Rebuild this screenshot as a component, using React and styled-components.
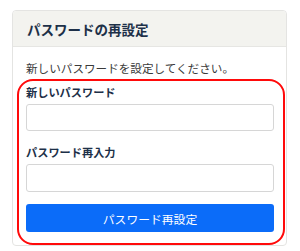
import React from 'react';
import styled, { createGlobalStyle } from 'styled-components';

const GlobalStyle = createGlobalStyle`
  html, body {
    margin: 0;
    padding: 0;
    background: #ffffff;
  }
  body {
    font-family: "Noto Sans CJK JP", "Noto Sans", sans-serif;
  }
  * {
    box-sizing: border-box;
  }
`

const Card = styled.section`
  width: 275px;
  margin: 10px 0 0 12px;
  border: 1px solid #e4e4e2;
  border-radius: 4px;
  background: #fff;
`
const CardHeader = styled.h2`
  margin: 0;
  height: 36px;
  padding: 0 14px;
  display: flex;
  align-items: center;
  background: #f3f3ef;
  border-bottom: 1px solid #e6e6e3;
  border-radius: 4px 4px 0 0;
  font-size: 13.5px;
  font-weight: 700;
  color: #1d3048;
`
const CardBody = styled.div`
  padding: 12px 12px 13px 13px;
`
const Lead = styled.p`
  margin: 0 0 7px;
  font-size: 11.6px;
  line-height: 18px;
  color: #3a3a3a;
`
const Form = styled.form`
  position: relative;
  display: flex;
  flex-direction: column;
`
const Highlight = styled.div`
  position: absolute;
  top: -5px;
  left: -9px;
  right: -11px;
  bottom: -13px;
  border: 2.5px solid #ff0a0a;
  border-radius: 16px;
  pointer-events: none;
`
const Label = styled.label`
  font-size: 11.2px;
  font-weight: 700;
  line-height: 16px;
  color: #1d3048;
  margin-bottom: 4px;
`
const Input = styled.input`
  height: ${p => p.$h || 28}px;
  width: 100%;
  border: 1px solid #d6d6d6;
  border-radius: 3px;
  background: #fff;
  margin-bottom: ${p => p.$mb || 0}px;
  outline: none;
`
const Submit = styled.button`
  height: 28px;
  width: 100%;
  border: none;
  border-radius: 3px;
  background: #0b6cf9;
  color: #fff;
  font-family: inherit;
  font-size: 11.8px;
  cursor: pointer;
`

export default function App() {
  return (
    <>
      <GlobalStyle />
      <Card>
        <CardHeader>パスワードの再設定</CardHeader>
        <CardBody>
          <Lead>新しいパスワードを設定してください。</Lead>
          <Form onSubmit={e => e.preventDefault()}>
            <Label>新しいパスワード</Label>
            <Input type="password" $h={27} $mb={13} />
            <Label>パスワード再入力</Label>
            <Input type="password" $h={28} $mb={12} />
            <Submit type="submit">パスワード再設定</Submit>
            <Highlight />
          </Form>
        </CardBody>
      </Card>
    </>
  );
}
